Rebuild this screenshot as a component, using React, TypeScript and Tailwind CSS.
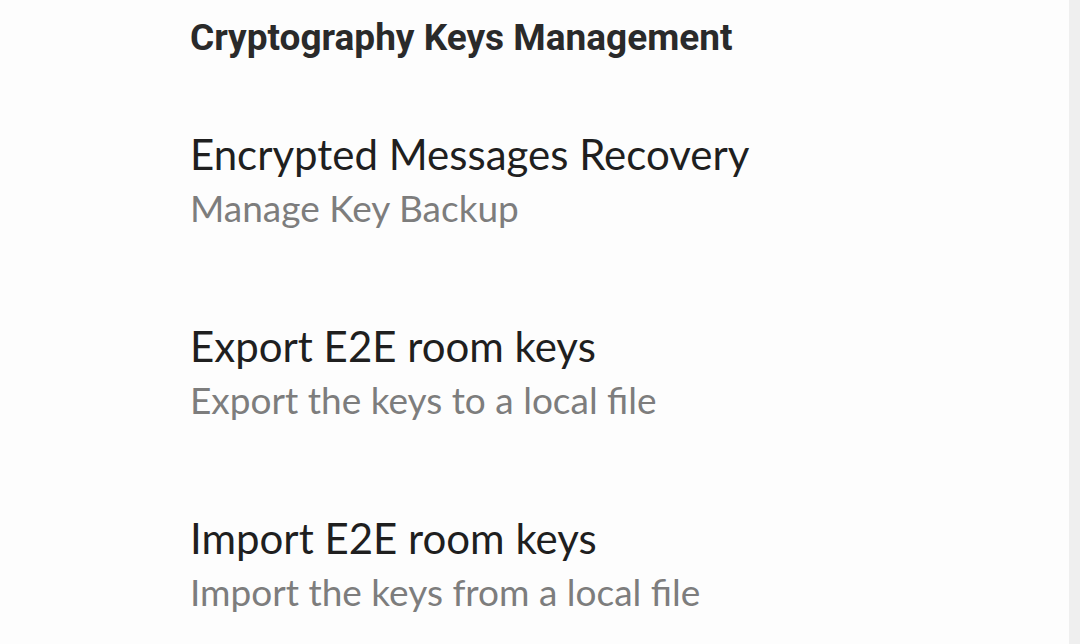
export default function App() {
  const items = [
    { title: "Encrypted Messages Recovery", sub: "Manage Key Backup" },
    { title: "Export E2E room keys", sub: "Export the keys to a local file" },
    { title: "Import E2E room keys", sub: "Import the keys from a local file" },
  ]

  return (
    <div className="flex h-[644px] w-[1080px] overflow-hidden bg-[#fdfdfd]">
      <div className="flex-1 pl-[190px]">
        <h2 className="pt-[16px] font-['Roboto',sans-serif] text-[37px] font-bold leading-[44px] text-[#2a2a2a]">
          Cryptography Keys Management
        </h2>
        <div className="mt-[69px] flex flex-col gap-[91px]">
          {items.map((item) => (
            <div key={item.title} className="font-['Lato',sans-serif]">
              <div className="text-[42px] leading-[50px] text-[#1f1f1f]">{item.title}</div>
              <div className="mt-[7px] text-[37px] leading-[44px] text-[#7d7d7d]">{item.sub}</div>
            </div>
          ))}
        </div>
      </div>
      <div className="w-[11px] bg-[#efefef]" />
    </div>
  )
}
